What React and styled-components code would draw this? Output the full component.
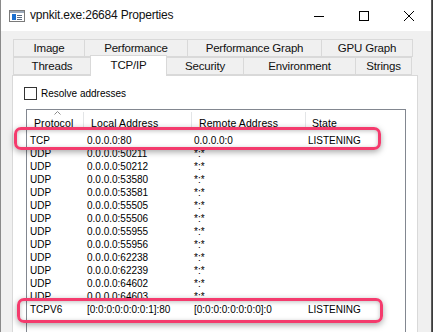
import styled, { createGlobalStyle } from "styled-components";

const Global = createGlobalStyle`
  html, body {
    margin: 0;
    padding: 0;
    background: #3b3b3b;
    font-family: "Liberation Sans", Arial, sans-serif;
  }
`;

const ROWS = [
  { proto: "TCP", local: "0.0.0.0:80", remote: "0.0.0.0:0", state: "LISTENING" },
  { proto: "UDP", local: "0.0.0.0:50211", remote: "*:*" },
  { proto: "UDP", local: "0.0.0.0:50212", remote: "*:*" },
  { proto: "UDP", local: "0.0.0.0:53580", remote: "*:*" },
  { proto: "UDP", local: "0.0.0.0:53581", remote: "*:*" },
  { proto: "UDP", local: "0.0.0.0:55505", remote: "*:*" },
  { proto: "UDP", local: "0.0.0.0:55506", remote: "*:*" },
  { proto: "UDP", local: "0.0.0.0:55955", remote: "*:*" },
  { proto: "UDP", local: "0.0.0.0:55956", remote: "*:*" },
  { proto: "UDP", local: "0.0.0.0:62238", remote: "*:*" },
  { proto: "UDP", local: "0.0.0.0:62239", remote: "*:*" },
  { proto: "UDP", local: "0.0.0.0:64602", remote: "*:*" },
  { proto: "UDP", local: "0.0.0.0:64603", remote: "*:*" },
  { proto: "TCPV6", local: "[0:0:0:0:0:0:0:1]:80", remote: "[0:0:0:0:0:0:0:0]:0", state: "LISTENING" },
];

const TOP_TABS = [
  { label: "Image", w: 72 },
  { label: "Performance", w: 104 },
  { label: "Performance Graph", w: 135 },
  { label: "GPU Graph", w: 92 },
];

const BOTTOM_TABS = [
  { label: "Threads", w: 78 },
  { label: "TCP/IP", w: 77, active: true },
  { label: "Security", w: 78 },
  { label: "Environment", w: 113 },
  { label: "Strings", w: 57 },
];

const COLS = "57px 108px 114px 1fr";

const Window = styled.div`
  position: relative;
  width: 430px;
  height: 332px;
  background: #f0f0f0;
  border-left: 1px solid #8a8a8a;
  border-right: 1px solid #5c5c5c;
  overflow: hidden;
`;

const TitleBar = styled.div`
  height: 31px;
  background: #fff;
  display: flex;
  align-items: center;
  padding-left: 8px;
`;

const Title = styled.div`
  flex: 1;
  margin-left: 5px;
  font-size: 12px;
  letter-spacing: -0.2px;
  color: #111;
  padding-bottom: 1px;
`;

const Controls = styled.div`
  display: flex;
  height: 31px;
`;

const CtrlBtn = styled.div`
  width: 45px;
  height: 31px;
  display: flex;
  align-items: center;
  justify-content: center;
`;

const Body = styled.div`
  padding: 8px 0 0 11px;
`;

const TabRow = styled.div`
  display: flex;
  align-items: flex-end;
  height: 18px;
  padding-left: 2px;
`;

const Tab = styled.div`
  position: relative;
  width: ${(p) => p.$w}px;
  height: ${(p) => (p.$active ? 21 : 18)}px;
  margin-left: -1px;
  margin-bottom: ${(p) => (p.$active ? -1 : 0)}px;
  box-sizing: border-box;
  border: 1px solid #d9d9d9;
  border-bottom: ${(p) => (p.$active ? "none" : "1px solid #d9d9d9")};
  background: ${(p) => (p.$active ? "#fff" : "#f0f0f0")};
  z-index: ${(p) => (p.$active ? 2 : 1)};
  display: flex;
  align-items: center;
  justify-content: center;
  padding-bottom: ${(p) => (p.$active ? 2 : 0)}px;
  font-size: 11.5px;
  letter-spacing: -0.2px;
  color: #111;
`;

const Panel = styled.div`
  width: 406px;
  height: 260px;
  background: #fff;
  border: 1px solid #d9d9d9;
  padding: 11px 0 0 11px;
  box-sizing: border-box;
`;

const CheckRow = styled.label`
  display: flex;
  align-items: center;
  height: 13px;
  font-size: 10px;
  color: #000;
`;

const Box = styled.span`
  width: 13px;
  height: 13px;
  box-sizing: border-box;
  border: 1px solid #333;
  background: #fff;
  margin-right: 4px;
`;

const List = styled.div`
  margin: 9px 0 0 2px;
  width: 380px;
  height: 240px;
  box-sizing: border-box;
  border: 1px solid #828790;
  background: #fff;
`;

const Header = styled.div`
  display: grid;
  grid-template-columns: ${COLS};
  height: 24px;
`;

const HeadCell = styled.div`
  position: relative;
  display: flex;
  align-items: center;
  padding-left: ${(p) => p.$pad}px;
  padding-top: 1px;
  font-size: 10.5px;
  letter-spacing: 0.1px;
  color: #000;
  &::after {
    content: "";
    display: ${(p) => (p.$last ? "none" : "block")};
    position: absolute;
    right: 0;
    top: 2px;
    height: 16px;
    width: 1px;
    background: #e3e5e7;
  }
`;

const SortArrow = styled.svg`
  position: absolute;
  left: 27px;
  top: 1px;
`;

const Row = styled.div`
  display: grid;
  grid-template-columns: ${COLS};
  height: 13px;
  line-height: 13px;
  font-size: 10px;
  color: #000;
`;

const Cell = styled.div`
  padding-left: ${(p) => p.$pad}px;
  white-space: nowrap;
`;

const Highlight = styled.div`
  position: absolute;
  left: ${(p) => p.$x}px;
  top: ${(p) => p.$y}px;
  width: ${(p) => p.$w}px;
  height: ${(p) => p.$h}px;
  box-sizing: border-box;
  border: 3px solid #f43b6d;
  border-radius: 7px;
  box-shadow: 0 2px 6px rgba(0, 0, 0, 0.35), inset 0 1px 4px rgba(0, 0, 0, 0.25);
  pointer-events: none;
`;

const AppIcon = () => (
  <svg width="16" height="12" viewBox="0 0 16 12">
    <rect x="0.5" y="0.5" width="15" height="11" fill="#fff" stroke="#7a7a7a" />
    <rect x="1" y="1" width="14" height="2" fill="#9aa7b8" />
    <rect x="3" y="4" width="4" height="6" fill="#1a6fd1" />
    <rect x="8" y="5" width="5" height="1" fill="#5b6b80" />
    <rect x="8" y="7" width="5" height="1" fill="#5b6b80" />
    <rect x="8" y="9" width="5" height="1" fill="#5b6b80" />
  </svg>
);

export default function App() {
  return (
    <>
      <Global />
      <Window>
        <TitleBar>
          <AppIcon />
          <Title>vpnkit.exe:26684 Properties</Title>
          <Controls>
            <CtrlBtn>
              <svg width="10" height="10" viewBox="0 0 10 10">
                <line x1="0" y1="5.5" x2="10" y2="5.5" stroke="#000" strokeWidth="1" />
              </svg>
            </CtrlBtn>
            <CtrlBtn>
              <svg width="10" height="10" viewBox="0 0 10 10">
                <rect x="0.5" y="0.5" width="9" height="9" fill="none" stroke="#000" strokeWidth="1" />
              </svg>
            </CtrlBtn>
            <CtrlBtn>
              <svg width="10" height="10" viewBox="0 0 10 10">
                <path d="M0 0 L10 10 M10 0 L0 10" stroke="#000" strokeWidth="1" />
              </svg>
            </CtrlBtn>
          </Controls>
        </TitleBar>

        <Body>
          <TabRow>
            {TOP_TABS.map((t) => (
              <Tab key={t.label} $w={t.w}>{t.label}</Tab>
            ))}
          </TabRow>
          <TabRow>
            {BOTTOM_TABS.map((t) => (
              <Tab key={t.label} $w={t.w} $active={t.active}>{t.label}</Tab>
            ))}
          </TabRow>
          <Panel>
            <CheckRow>
              <Box />
              Resolve addresses
            </CheckRow>
            <List>
              <Header>
                <HeadCell $pad={7}>
                  <SortArrow width="7" height="4" viewBox="0 0 7 4">
                    <path d="M0.5 3.5 L3.5 0.5 L6.5 3.5" fill="none" stroke="#8a8a8a" strokeWidth="1" />
                  </SortArrow>
                  Protocol
                </HeadCell>
                <HeadCell $pad={7}>Local Address</HeadCell>
                <HeadCell $pad={7}>Remote Address</HeadCell>
                <HeadCell $pad={6} $last>State</HeadCell>
              </Header>
              {ROWS.map((r, i) => (
                <Row key={i}>
                  <Cell $pad={3}>{r.proto}</Cell>
                  <Cell $pad={3}>{r.local}</Cell>
                  <Cell $pad={2}>{r.remote}</Cell>
                  <Cell $pad={2}>{r.state || ""}</Cell>
                </Row>
              ))}
            </List>
          </Panel>
        </Body>

        <Highlight $x={13} $y={127} $w={367} $h={23} />
        <Highlight $x={16} $y={298} $w={366} $h={25} />
      </Window>
    </>
  );
}
